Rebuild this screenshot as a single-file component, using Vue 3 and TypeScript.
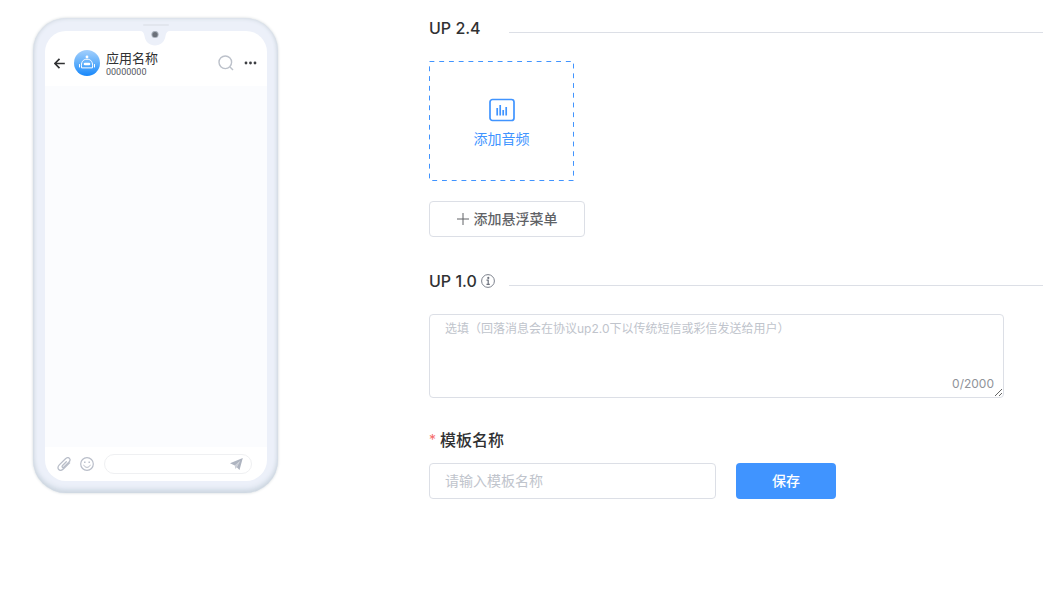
<script setup lang="ts">
import { computed, ref } from 'vue'

const fallback = ref('')
const templateName = ref('')
const maxLength = 2000
const counter = computed(() => `${fallback.value.length}/${maxLength}`)
</script>

<template>
  <main class="page">
    <aside class="phone">
      <div class="screen">
        <span class="speaker"></span>
        <svg class="notch" viewBox="0 0 30 15" aria-hidden="true">
          <path d="M0 0H30C27 0 26 2 25.500 5C24.500 11 20.500 14.500 15 14.500S5.500 11 4.500 5C4 2 3 0 0 0Z" fill="#ecf0f9" />
          <circle cx="15" cy="3.500" r="3.600" fill="#a9b0bb" />
          <circle cx="15" cy="3.500" r="2.600" fill="#6b7079" />
        </svg>
        <header class="phone-head">
          <svg class="back" viewBox="0 0 12 12" fill="none" stroke="#303133" stroke-width="1.800" aria-hidden="true">
            <path d="M11.800 6H1.200M6 1L1 6L6 11" />
          </svg>
          <svg class="avatar" viewBox="0 0 26 26" aria-hidden="true">
            <defs>
              <linearGradient id="avatarFill" x1="0" y1="0" x2="0" y2="1">
                <stop offset="0" stop-color="#a3cffc" />
                <stop offset=".5" stop-color="#62b0fb" />
                <stop offset="1" stop-color="#1687fb" />
              </linearGradient>
            </defs>
            <circle cx="13" cy="13" r="13" fill="url(#avatarFill)" />
            <g fill="none" stroke="#fff" stroke-linecap="round">
              <path d="M7.500 17.500C6.800 12 9 9.200 13 9.200S19.200 12 18.500 17.500Z" stroke-width="1" stroke-linejoin="round" />
              <path d="M5.500 14.500V17M20.500 14.500V17" stroke-width="1" />
              <path d="M11 14H15" stroke-width="2.600" />
            </g>
            <circle cx="13" cy="6.900" r="1.400" fill="#fff" />
          </svg>
          <div class="app">
            <span class="app-name">应用名称</span>
            <span class="app-id">00000000</span>
          </div>
          <svg class="search" viewBox="0 0 16 16" fill="none" stroke="#bcc1ca" stroke-width="1.400" aria-hidden="true">
            <circle cx="7.300" cy="7.300" r="6.300" />
            <path d="M12 12L15 15" />
          </svg>
          <svg class="more" viewBox="0 0 12 4" fill="#3c3e42" aria-hidden="true">
            <circle cx="1.500" cy="2" r="1.400" />
            <circle cx="6" cy="2" r="1.400" />
            <circle cx="10.500" cy="2" r="1.400" />
          </svg>
        </header>
        <div class="chat"></div>
        <footer class="phone-foot">
          <svg class="foot-icon" viewBox="0 0 14 14" fill="none" stroke="#b9bec9" stroke-width="1.300" stroke-linecap="round" aria-hidden="true">
            <path d="M9.300 4.800L5.600 8.500C4.200 9.900 5.800 11.200 7 10L11.800 5.300C14.800 2.200 11.500 -1 8.500 1.800L2.300 7.900C-1.200 11.500 3 15.200 6.300 12L12.600 5.900" />
          </svg>
          <svg class="foot-icon" viewBox="0 0 14 14" fill="none" stroke="#b9bec9" aria-hidden="true">
            <circle cx="7" cy="7" r="6.300" stroke-width="1.200" />
            <path d="M3.800 8.200C4.600 11.200 9.400 11.200 10.200 8.200" stroke-linecap="round" />
            <path d="M4.800 4.500V6M9.200 4.500V6" stroke-width="1.400" />
          </svg>
          <div class="bubble">
            <svg class="send" viewBox="0 0 13 12" fill="#aeb4c0" aria-hidden="true">
              <path d="M12.800 0L9.500 12L6.800 9.300L10 3L4.800 7.600L0 5.200Z" />
              <path d="M4.800 7.600L10 3L6.800 9.300L5.300 11Z" opacity=".65" />
            </svg>
          </div>
        </footer>
      </div>
    </aside>

    <form class="editor" @submit.prevent>
      <div class="section">
        <h2 class="title">UP 2.4</h2>
        <span class="rule"></span>
      </div>

      <button type="button" class="upload">
        <svg class="dashes" aria-hidden="true">
          <rect class="dash-rect" x="0.5" y="0.5" pathLength="540" />
        </svg>
        <svg class="audio" viewBox="0 0 26 24" fill="none" stroke="#4094ff" aria-hidden="true">
          <rect x="1" y="1.500" width="24" height="21" rx="2.500" stroke-width="1.700" />
          <path d="M8.200 10V17.500M11.200 7V17.500M14.200 12V17.500M17.200 9V17.500" stroke-width="1.700" />
        </svg>
        <span>添加音频</span>
      </button>

      <button type="button" class="menu-btn">
        <svg class="plus" viewBox="0 0 12 12" stroke="#606266" aria-hidden="true">
          <path d="M0 6H12M6 0V12" />
        </svg>
        <span>添加悬浮菜单</span>
      </button>

      <div class="section second">
        <h2 class="title">
          <label for="fallback">UP 1.0</label>
          <svg class="info" viewBox="0 0 14 14" aria-hidden="true">
            <circle cx="7" cy="7" r="6.400" fill="none" stroke="#7d828d" />
            <circle cx="7.300" cy="3.900" r="1.100" fill="#6d727d" />
            <path d="M5.500 6.200H7.200V10.300M5.500 10.300H8.800" fill="none" stroke="#6d727d" stroke-width="1.200" />
          </svg>
        </h2>
        <span class="rule"></span>
      </div>

      <div class="area">
        <textarea
          id="fallback"
          v-model="fallback"
          :maxlength="maxLength"
          placeholder="选填（回落消息会在协议up2.0下以传统短信或彩信发送给用户）"
        ></textarea>
        <span class="count">{{ counter }}</span>
      </div>

      <label class="name-label" for="template-name"><span class="star">*</span>模板名称</label>
      <div class="save-row">
        <input id="template-name" v-model="templateName" type="text" placeholder="请输入模板名称" />
        <button type="submit" class="save">保存</button>
      </div>
    </form>
  </main>
</template>

<style>
body {
  background: #fff;
}
</style>

<style scoped>
.page,
.page * {
  box-sizing: border-box;
}
.page {
  display: flex;
  align-items: flex-start;
  gap: 151px;
  padding: 18px 0 32px 33px;
  font-family: Inter, "Noto Sans CJK SC", sans-serif;
  font-size: 14px;
  color: #303133;
}
button,
input,
textarea {
  font: inherit;
}
.phone {
  flex: none;
  width: 245px;
  padding: 13px 11px 12px 12px;
  border-radius: 33px;
  background: #ecf0f9;
  box-shadow: inset 0 0 4px #c9d2da, inset 0 -4px 5px #d3dce7, 0 0 3px #cfd5d8;
}
.screen {
  position: relative;
  display: flex;
  flex-direction: column;
  height: 450px;
  border-radius: 21px;
  background: #fff;
}
.speaker {
  position: absolute;
  top: -7px;
  left: 50%;
  width: 26px;
  height: 2px;
  margin-left: -13px;
  border-radius: 1px;
  background: #e2e6ee;
}
.notch {
  position: absolute;
  top: 0;
  left: 50%;
  width: 30px;
  height: 15px;
  margin-left: -16px;
}
.phone-head {
  display: flex;
  align-items: center;
  height: 55px;
  padding: 9px 10px 0 9px;
}
.back {
  width: 11px;
  height: 11px;
  margin-right: 9px;
}
.avatar {
  width: 26px;
  height: 26px;
  margin-right: 6px;
}
.app {
  display: flex;
  flex-direction: column;
  flex: 1;
  padding-top: 2px;
}
.app-name {
  font-size: 13px;
  line-height: 16px;
}
.app-id {
  font-family: Roboto, sans-serif;
  font-size: 9px;
  line-height: 13px;
  color: #55585e;
}
.search {
  width: 16px;
  height: 16px;
  margin-right: 10px;
}
.more {
  width: 13px;
  height: 4px;
}
.chat {
  flex: 1;
  background: #fbfcfe;
}
.phone-foot {
  display: flex;
  align-items: center;
  gap: 9px;
  height: 34px;
  padding: 0 15px 0 12px;
}
.foot-icon {
  flex: none;
  width: 14px;
  height: 14px;
}
.bubble {
  display: flex;
  flex: 1;
  align-items: center;
  justify-content: flex-end;
  height: 20px;
  margin-left: 1px;
  padding-right: 8px;
  border: 1px solid #eff0f2;
  border-radius: 10px;
}
.send {
  width: 13px;
  height: 12px;
}
.editor {
  flex: 1;
  min-width: 0;
}
.section {
  display: flex;
  align-items: center;
  height: 20px;
}
.second {
  margin-top: 34px;
}
.title {
  display: flex;
  align-items: center;
  gap: 4px;
  width: 80px;
  margin: 0;
  font-size: 16px;
  font-weight: 500;
  line-height: 20px;
}
.rule {
  flex: 1;
  height: 1px;
  margin-top: 8px;
  background: #dcdfe6;
}
.info {
  width: 14px;
  height: 14px;
}
.upload {
  position: relative;
  display: flex;
  flex-direction: column;
  align-items: center;
  justify-content: center;
  gap: 7px;
  width: 145px;
  height: 120px;
  margin-top: 23px;
  padding: 5px 0 0;
  border: 0;
  background: none;
  line-height: 20px;
  color: #4094ff;
  cursor: pointer;
}
.dashes {
  position: absolute;
  inset: 0;
  width: 100%;
  height: 100%;
}
.dash-rect {
  width: calc(100% - 1px);
  height: calc(100% - 1px);
  fill: none;
  stroke: #4094ff;
  stroke-dasharray: 5 5;
}
.audio {
  width: 26px;
  height: 24px;
}
.menu-btn {
  display: flex;
  align-items: center;
  justify-content: center;
  gap: 5px;
  width: 156px;
  height: 36px;
  margin-top: 20px;
  padding: 0;
  border: 1px solid #dcdfe6;
  border-radius: 4px;
  background: #fff;
  font-weight: 500;
  line-height: 20px;
  color: #606266;
  cursor: pointer;
}
.plus {
  width: 12px;
  height: 12px;
}
.area {
  position: relative;
  margin: 23px 39px 0 0;
}
textarea {
  display: block;
  width: 100%;
  height: 84px;
  padding: 5px 15px;
  border: 1px solid #dcdfe6;
  border-radius: 4px;
  font-size: 12px;
  line-height: 18px;
  color: #606266;
  resize: vertical;
}
textarea::placeholder,
input::placeholder {
  color: #c0c4cc;
}
.count {
  position: absolute;
  right: 10px;
  bottom: 5px;
  font-size: 12px;
  line-height: 18px;
  color: #909399;
}
.name-label {
  display: flex;
  gap: 4px;
  margin-top: 32px;
  font-size: 16px;
  font-weight: 500;
  line-height: 20px;
}
.star {
  font-size: 14px;
  font-weight: 400;
  color: #f56c6c;
}
.save-row {
  display: flex;
  gap: 20px;
  margin-top: 13px;
}
input {
  width: 287px;
  height: 36px;
  padding: 0 15px 2px;
  border: 1px solid #dcdfe6;
  border-radius: 4px;
  color: #606266;
}
.save {
  width: 100px;
  height: 36px;
  padding: 0;
  border: 0;
  border-radius: 4px;
  background: #4094ff;
  font-weight: 500;
  line-height: 20px;
  color: #fff;
  cursor: pointer;
}
</style>
